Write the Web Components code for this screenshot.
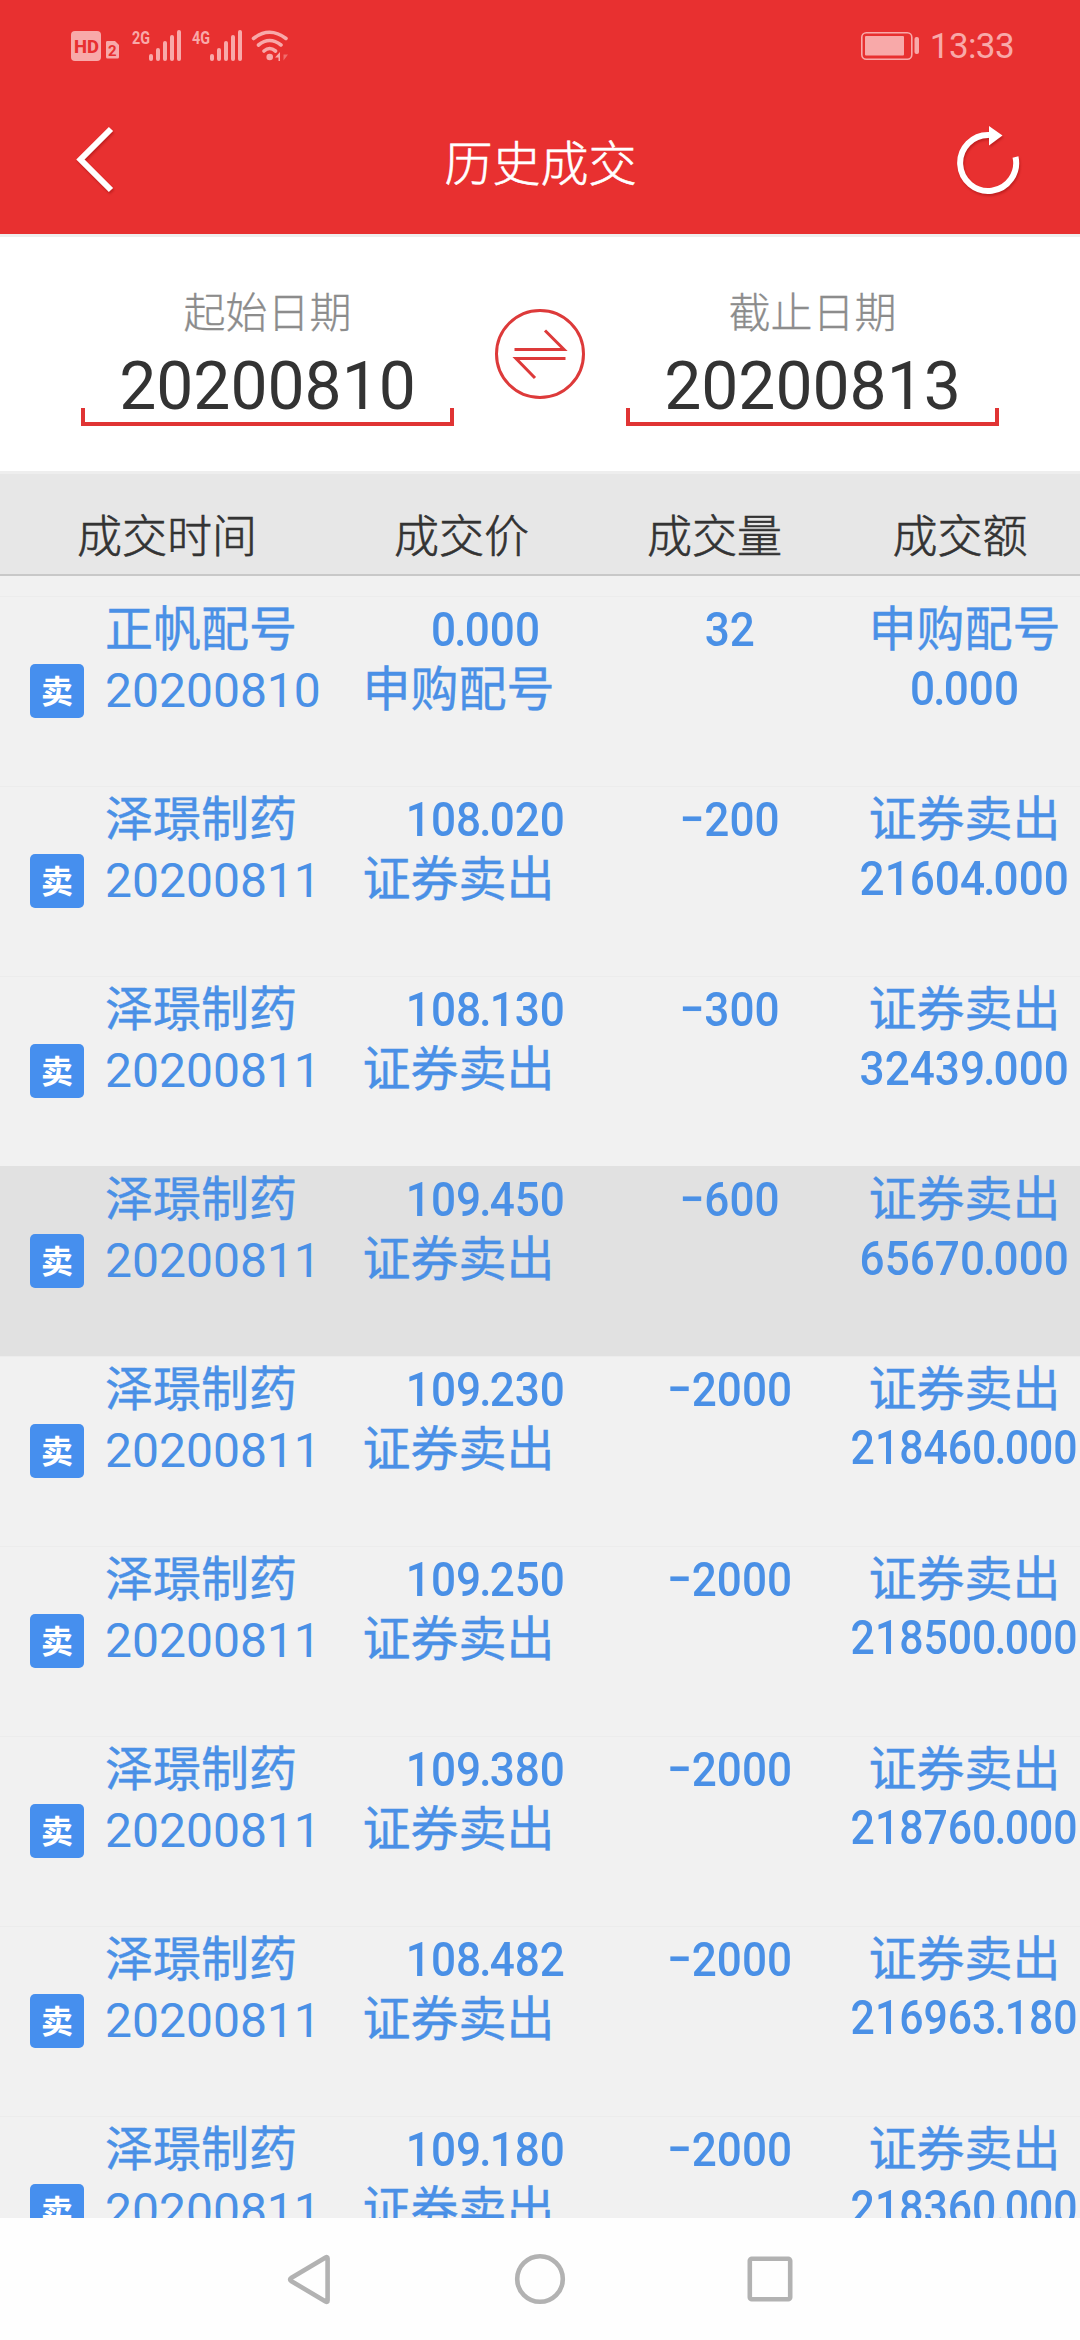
<!DOCTYPE html>
<html lang="zh-CN">
<head>
<meta charset="utf-8">
<title>历史成交</title>
<style>
    body {
        margin: 0;
        width: 1080px;
        height: 2340px;
        overflow: hidden;
        font-family: Roboto, "Noto Sans CJK SC", sans-serif;
    }
</style>
</head>
<body>
<trade-app>
    <status-bar slot="top" time="13:33"></status-bar>
    <title-bar slot="top">历史成交</title-bar>
    <date-range slot="top">
        <date-field slot="from" label="起始日期">20200810</date-field>
        <date-field slot="to" label="截止日期">20200813</date-field>
    </date-range>
    <table-head slot="top">
        <span>成交时间</span>
        <span>成交价</span>
        <span>成交量</span>
        <span>成交额</span>
    </table-head>
    <trade-list></trade-list>
    <nav-bar slot="bottom"></nav-bar>
</trade-app>

<script>
class TradeApp extends HTMLElement {
    constructor() {
        super();
        this.attachShadow({ mode: 'open' });
        this.shadowRoot.innerHTML = `
        <style>
            :host {
                display: flex;
                flex-direction: column;
                height: 2340px;
                background: #f1f1f1;
            }

            main {
                flex: 1;
                min-height: 0;
                overflow: hidden;
            }
        </style>
        <slot name="top"></slot>
        <main><slot></slot></main>
        <slot name="bottom"></slot>
        `;
    }
}

class StatusBar extends HTMLElement {
    constructor() {
        super();
        this.attachShadow({ mode: 'open' });
        this.shadowRoot.innerHTML = `
        <style>
            :host {
                display: flex;
                justify-content: space-between;
                box-sizing: border-box;
                height: 90px;
                padding: 0 66px 0 71px;
                background: #e83030;
                color: #f8a9a9;
            }

            svg {
                display: block;
                fill: currentColor;
            }

            #right {
                display: flex;
            }

            #time {
                font-size: 35px;
                line-height: 93px;
                letter-spacing: -0.6px;
                margin-left: 10px;
            }
        </style>
        <svg width="220" height="90" viewBox="71 0 220 90">
            <rect x="71" y="31" width="30" height="30" rx="4"/>
            <text x="74" y="52.5" font-size="19" font-weight="800" fill="#e83030" textLength="25" lengthAdjust="spacingAndGlyphs">HD</text>
            <path d="M107 41h8l4 4v12a1.500 1.500 0 0 1-1.500 1.500h-10a1.500 1.500 0 0 1-1.500-1.500v-14.500a1.500 1.500 0 0 1 1-1.500z"/>
            <text x="108" y="56" font-size="15" font-weight="700" fill="#e83030">2</text>
            <text x="132" y="43.500" font-size="19" font-weight="700" textLength="18" lengthAdjust="spacingAndGlyphs">2G</text>
            <g id="bars">
                <rect x="149" y="54" width="4" height="7" rx="2"/>
                <rect x="156" y="48" width="4" height="13" rx="2"/>
                <rect x="163" y="41" width="4" height="20" rx="2"/>
                <rect x="170" y="35" width="4" height="26" rx="2"/>
                <rect x="177" y="30" width="4" height="31" rx="2"/>
            </g>
            <text x="192" y="43.500" font-size="19" font-weight="700" textLength="18" lengthAdjust="spacingAndGlyphs">4G</text>
            <use href="#bars" x="61"/>
            <g fill="none" stroke="currentColor" stroke-width="3.600" stroke-linecap="round">
                <path d="M253.500 38.500q16-12.500 32.500 0M258.500 45q11-9 22.500 0M264 51q5.500-5 11.500 0"/>
            </g>
            <circle cx="269.700" cy="57" r="3.300"/>
            <path d="M275 57.500l5-5.500v9h-1.500v-3.500z"/>
            <path d="M283.500 52v9M283.500 54.500h4.500l-4.500 6z" opacity="0.5"/>
        </svg>
        <div id="right">
            <svg width="60" height="90" viewBox="861 0 60 90">
                <rect x="862.800" y="32.800" width="50" height="26.400" rx="4.500" fill="none" stroke="currentColor" stroke-width="1.600"/>
                <rect x="866" y="36" width="39" height="19.500" rx="1"/>
                <rect x="915.500" y="37" width="4.500" height="17" rx="2"/>
            </svg>
            <span id="time"></span>
        </div>
        `;
        this.shadowRoot.getElementById('time').textContent = this.getAttribute('time');
    }
}

class TitleBar extends HTMLElement {
    constructor() {
        super();
        this.attachShadow({ mode: 'open' });
        this.shadowRoot.innerHTML = `
        <style>
            :host {
                display: flex;
                align-items: center;
                justify-content: space-between;
                box-sizing: border-box;
                height: 147px;
                padding: 0 57px 0 72px;
                background: #e83030;
                border-bottom: 3px solid #eee;
                color: #fff;
            }

            h1 {
                margin: 0;
                font-size: 48px;
                font-weight: 300;
                line-height: 144px;
                padding: 5px 0 0 1px;
                -webkit-text-stroke: 0.6px;
            }

            svg {
                width: 72px;
                height: 80px;
                fill: none;
                stroke: #fff;
                stroke-width: 6;
                filter: drop-shadow(1px 2px 1px rgba(120, 0, 0, 0.35));
            }

            #back {
                width: 57px;
            }
        </style>
        <svg id="back" viewBox="72 122 57 80"><path d="M111 129L80.500 159.500L111 190"/></svg>
        <h1><slot></slot></h1>
        <svg viewBox="951 122 72 80">
            <path d="M1015.500 157A28 28 0 1 1 989 135"/>
            <path d="M989 126v19.500l13.500-10z" fill="#fff" stroke="none"/>
        </svg>
        `;
    }
}

class DateField extends HTMLElement {
    constructor() {
        super();
        this.attachShadow({ mode: 'open' });
        this.shadowRoot.innerHTML = `
        <style>
            :host {
                display: flex;
                flex-direction: column;
                width: 373px;
                text-align: center;
            }

            label {
                font-size: 42px;
                line-height: 60px;
                font-weight: 300;
                color: #8c8c8c;
                -webkit-text-stroke: 0.3px;
            }

            #value {
                margin-top: 4px;
                font-size: 66px;
                line-height: 78px;
                color: #333;
            }

            /* tray under the date */
            #tray {
                height: 14px;
                margin-top: -18px;
                border: 4px solid #e03434;
                border-top: none;
            }
        </style>
        <label></label>
        <span id="value"><slot></slot></span>
        <div id="tray"></div>
        `;
        this.shadowRoot.querySelector('label').textContent = this.getAttribute('label');
    }
}

class DateRange extends HTMLElement {
    constructor() {
        super();
        this.attachShadow({ mode: 'open' });
        this.shadowRoot.innerHTML = `
        <style>
            :host {
                display: flex;
                justify-content: space-between;
                box-sizing: border-box;
                height: 237px;
                padding: 47px 81px 0;
                background: #fff;
                border-bottom: 3px solid #eee;
            }

            svg {
                margin-top: 25px;
                fill: none;
                stroke: #dd3a3a;
                stroke-width: 3;
            }
        </style>
        <slot name="from"></slot>
        <svg width="90" height="90" viewBox="495 309 90 90">
            <circle cx="540" cy="354" r="43.500"/>
            <path d="M514.500 349.500H564L545 330.500M565.500 358.500H516L535 378"/>
        </svg>
        <slot name="to"></slot>
        `;
    }
}

class TableHead extends HTMLElement {
    constructor() {
        super();
        this.attachShadow({ mode: 'open' });
        this.shadowRoot.innerHTML = `
        <style>
            :host {
                display: grid;
                grid-template-columns: 334px 255px 251px 240px;
                box-sizing: border-box;
                height: 102px;
                padding-top: 28px;
                background: #e7e7e7;
                border-bottom: 2px solid #c8c8c8;
                color: #333;
                font-size: 45px;
                line-height: 72px;
                text-align: center;
                font-weight: 300;
                -webkit-text-stroke: 0.6px;
            }
        </style>
        <slot></slot>
        `;
    }
}

class TradeRow extends HTMLElement {
    constructor() {
        super();
        this.attachShadow({ mode: 'open' });
    }

    connectedCallback() {
        const { name, date, price, kind, count, amount } = this.trade;
        // the decimal point sits tighter than the digits
        const num = value => value.replace('.', '<i>.</i>');
        this.shadowRoot.innerHTML = `
        <style>
            :host {
                display: grid;
                grid-template-columns: 105px 230px 247px 295px 175px;
                box-sizing: border-box;
                height: 190px;
                padding-top: 3px;
                border-top: 1px solid #ececec;
                color: #4a90e6;
                font-size: 48px;
                line-height: 60px;
                white-space: nowrap;
            }

            :host([pressed]) {
                background: #e1e1e1;
                border-top-color: #e1e1e1;
            }

            div {
                display: flex;
                flex-direction: column;
                align-items: center;
            }

            #who {
                align-items: flex-start;
            }

            #badge {
                width: 54px;
                height: 54px;
                margin: 64px 0 0 30px;
                border-radius: 5px;
                background: #468fee;
                color: #fff;
                font-size: 32px;
                font-weight: 700;
                line-height: 57px;
                text-align: center;
            }

            .cjk {
                -webkit-text-stroke: 0.4px;
            }

            .date {
                margin-top: 1px;
            }

            .num {
                font-size: 49px;
                font-weight: 500;
                transform: scaleX(0.9);
            }

            .num i {
                font-style: normal;
                margin: 0 -2px;
            }

            .cjk + .num {
                margin-top: -1px;
            }

            .long {
                font-size: 47.5px;
                line-height: 58px;
            }

            #price .num {
                margin-left: 54px;
            }
        </style>
        <span id="badge">卖</span>
        <div id="who"><span class="cjk">${name}</span><span class="date">${date}</span></div>
        <div id="price"><span class="num">${num(price)}</span><span class="cjk">${kind}</span></div>
        <div><span class="num">${count}</span></div>
        <div><span class="cjk">${kind}</span><span class="num ${amount.length > 9 ? 'long' : ''}">${num(amount)}</span></div>
        `;
    }
}

class TradeList extends HTMLElement {
    constructor() {
        super();
        this.attachShadow({ mode: 'open' });
        this.shadowRoot.innerHTML = `
        <style>
            :host {
                display: block;
                padding-top: 20px;
            }
        </style>
        `;

        const sold = (price, count, amount) => ({
            name: '泽璟制药', date: '20200811', kind: '证券卖出', price, count, amount
        });
        const trades = [
            { name: '正帆配号', date: '20200810', kind: '申购配号', price: '0.000', count: '32', amount: '0.000' },
            sold('108.020', '−200', '21604.000'),
            sold('108.130', '−300', '32439.000'),
            sold('109.450', '−600', '65670.000'),
            sold('109.230', '−2000', '218460.000'),
            sold('109.250', '−2000', '218500.000'),
            sold('109.380', '−2000', '218760.000'),
            sold('108.482', '−2000', '216963.180'),
            sold('109.180', '−2000', '218360.000')
        ];
        trades.forEach((trade, i) => {
            const row = document.createElement('trade-row');
            row.trade = trade;
            if (i === 3) row.setAttribute('pressed', '');
            this.shadowRoot.appendChild(row);
        });
    }
}

class NavBar extends HTMLElement {
    constructor() {
        super();
        this.attachShadow({ mode: 'open' });
        this.shadowRoot.innerHTML = `
        <style>
            :host {
                display: flex;
                align-items: center;
                justify-content: center;
                gap: 170px;
                height: 122px;
                background: #fefefe;
            }

            svg {
                width: 60px;
                height: 60px;
                fill: none;
                stroke: #b2b2b2;
                stroke-width: 4.6;
                stroke-linejoin: round;
            }
        </style>
        <svg viewBox="280 2249 60 60"><path d="M327.600 2258.500v42q0 2-2 1l-34.500-20.500q-2-1.500 0-3l34.500-20.500q2-1 2 1z"/></svg>
        <svg viewBox="510 2249 60 60"><circle cx="540" cy="2279" r="22.800"/></svg>
        <svg viewBox="739 2249 60 60"><rect x="748.800" y="2258.800" width="40.400" height="40.400" rx="2"/></svg>
        `;
    }
}

customElements.define('trade-app', TradeApp);
customElements.define('status-bar', StatusBar);
customElements.define('title-bar', TitleBar);
customElements.define('date-field', DateField);
customElements.define('date-range', DateRange);
customElements.define('table-head', TableHead);
customElements.define('trade-row', TradeRow);
customElements.define('trade-list', TradeList);
customElements.define('nav-bar', NavBar);
</script>
</body>
</html>
